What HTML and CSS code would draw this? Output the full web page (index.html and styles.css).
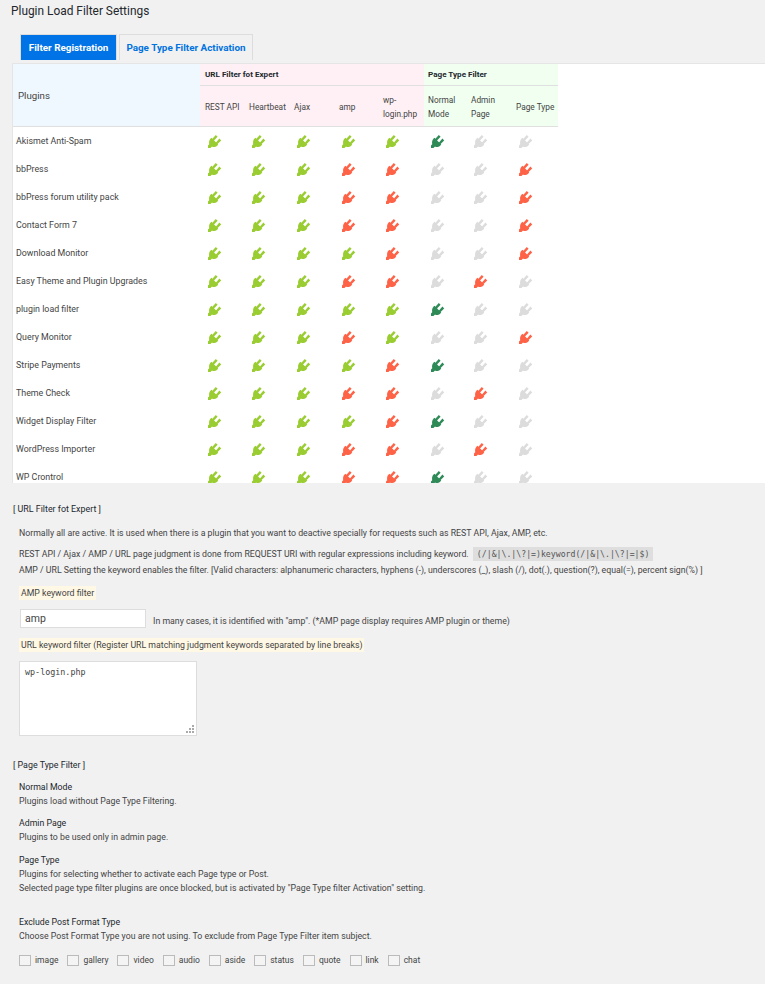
FILE: index.html
```html
<!DOCTYPE html>
<html lang="en">
<head>
<meta charset="utf-8">
<title>Plugin Load Filter Settings</title>
<link rel="stylesheet" href="styles.css">
</head>
<body>
<svg class="defs" width="0" height="0" aria-hidden="true"><symbol id="plug" viewBox="0 0 14 14"><path d="M0 14 V11.5 L1.2 10.3 C.8 8 1.2 6 2.6 4.6 L3.4 3.8 L10.2 10.6 L9.4 11.4 C8 12.8 6 13.2 3.7 12.8 L2.5 14 Z M4.4 4.8 L7.8 1 L9.6 2.8 L6 6.4 Z M8 8.4 L11.4 4.6 L13.2 6.4 L9.6 10 Z"/></symbol></svg>
<h1 class="title">Plugin Load Filter Settings</h1>
<nav class="tabs">
<a class="tab active">Filter Registration</a>
<a class="tab">Page Type Filter Activation</a>
</nav>
<div class="panel">
<table class="grid">
<colgroup><col class="c0"><col class="w44"><col class="w45"><col class="w45"><col class="w44"><col class="w46"><col class="w43"><col class="w45"><col class="w46"></colgroup>
<thead>
<tr class="h1"><th rowspan="2" class="plugins">Plugins</th><th colspan="5" class="url">URL Filter fot Expert</th><th colspan="3" class="ptype">Page Type Filter</th></tr>
<tr class="h2"><td class="url">REST API</td><td class="url">Heartbeat</td><td class="url">Ajax</td><td class="url">amp</td><td class="url">wp-login.php</td><td class="ptype">Normal Mode</td><td class="ptype">Admin Page</td><td class="ptype">Page Type</td></tr>
</thead>
<tbody id="rows"></tbody>
</table>
</div>
<section class="notes">
<h3 class="sec">[ URL Filter fot Expert ]</h3>
<p class="p1">Normally all are active. It is used when there is a plugin that you want to deactive specially for requests such as REST API, Ajax, AMP, etc.</p>
<p class="p2">REST API / Ajax / AMP / URL page judgment is done from REQUEST URI with regular expressions including keyword. <code>(/|&amp;|\.|\?|=)keyword(/|&amp;|\.|\?|=|$)</code><br>AMP / URL Setting the keyword enables the filter. [Valid characters: alphanumeric characters, hyphens (-), underscores (_), slash (/), dot(.), question(?), equal(=), percent sign(%) ]</p>
<div class="lab l1"><span>AMP keyword filter</span></div>
<div class="amp"><input class="kw" type="text" value="amp"><span class="hint">In many cases, it is identified with "amp". (*AMP page display requires AMP plugin or theme)</span></div>
<div class="lab l2"><span>URL keyword filter (Register URL matching judgment keywords separated by line breaks)</span></div>
<div class="ta-wrap"><textarea class="ta">wp-login.php</textarea><svg class="grip" width="9" height="9" viewBox="0 0 9 9" aria-hidden="true"><path d="M6 0h2v2H6zM3 3h2v2H3zM6 3h2v2H6zM0 6h2v2H0zM3 6h2v2H3zM6 6h2v2H6z"/></svg></div>
<h3 class="sec sec2">[ Page Type Filter ]</h3>
<dl class="d d1"><dt>Normal Mode</dt><dd>Plugins load without Page Type Filtering.</dd></dl>
<dl class="d d2"><dt>Admin Page</dt><dd>Plugins to be used only in admin page.</dd></dl>
<dl class="d d3"><dt>Page Type</dt><dd>Plugins for selecting whether to activate each Page type or Post.<br>Selected page type filter plugins are once blocked, but is activated by "Page Type filter Activation" setting.</dd></dl>
<dl class="d d4"><dt>Exclude Post Format Type</dt><dd>Choose Post Format Type you are not using. To exclude from Page Type Filter item subject.</dd></dl>
<div class="checks">
<label><input type="checkbox">image</label><label><input type="checkbox">gallery</label><label><input type="checkbox">video</label><label><input type="checkbox">audio</label><label><input type="checkbox">aside</label><label><input type="checkbox">status</label><label><input type="checkbox">quote</label><label><input type="checkbox">link</label><label><input type="checkbox">chat</label>
</div>
</section>
<script src="app.js"></script>
</body>
</html>
```
FILE: styles.css
```css
* { box-sizing: border-box; }
html, body { margin: 0; padding: 0; }
body { width: 765px; height: 984px; overflow: hidden; background: #f1f1f1; color: #444; font: 8.76px/14px Roboto, "Open Sans", sans-serif; }
.defs { position: absolute; }
.title { margin: 0; padding: 3px 0 0 11px; height: 34px; font-size: 11.9px; line-height: 16px; font-weight: 400; color: #23282d; }
.tabs { display: flex; gap: 2px; padding-left: 20px; height: 26px; }
.tab { display: flex; align-items: center; justify-content: center; height: 26px; font-size: 9.9px; font-weight: 700; color: #0073e0; background: #f1f1f1; border: 1px solid #ddd; border-bottom: 0; }
.tab.active { width: 97px; background: #0073e6; color: #fff; border-color: #ddd; }
.tab:not(.active) { width: 134px; }
.panel { margin: 3px 0 0 12px; height: 420px; overflow: hidden; background: #fff; border-top: 1px solid #e5e5e5; border-left: 1px solid #e5e5e5; }
.grid { width: 545px; border-collapse: collapse; table-layout: fixed; font-size: 8.3px; }
.c0 { width: 187px; } .w43 { width: 43px; } .w44 { width: 44px; } .w45 { width: 45px; } .w46 { width: 46px; }
.grid th, .grid td { padding: 0 0 0 5px; font-weight: 400; text-align: left; }
.h1 { height: 21px; }
.h2 { height: 41px; border-bottom: 1px solid #e0e0e0; }
.grid .h1 .url, .grid .h1 .ptype { font-weight: 700; font-size: 8.1px; color: #23282d; border-bottom: 1px solid #e0e0e0; }
.grid .h2 td { line-height: 14px; padding-right: 1px; padding-top: 2px; }
.url { background: #fff0f5; }
.ptype { background: #f0fff0; }
.grid .ptype { padding-left: 4px; }
.grid .plugins { background: #f0f8ff; font-size: 9.7px; padding: 2px 0 0 5px; border-bottom: 1px solid #e0e0e0; }
.grid tbody tr { height: 28px; }
.grid tbody td { padding: 2px 0 0 8px; }
.grid tbody td:nth-child(n+7) { padding-left: 7px; }
.grid tbody td.name { padding-left: 3px; font-size: 8.85px; }
.pi { display: block; width: 14px; height: 14px; }
.g { fill: #9acd32; } .r { fill: #ff6347; } .d-on { fill: #2e8b57; } .x { fill: #dcdcdc; }
.notes { padding-left: 13px; }
.sec { margin: 0; padding-top: 19px; height: 33px; line-height: 14px; font-size: 8.9px; font-weight: 400; color: #23282d; }
.p1 { margin: 10px 0 0 6px; }
.p2 { margin: 6px 0 0 6px; line-height: 16px; }
code { font: 8.2px/15px "DejaVu Sans Mono", monospace; background: #dedede; padding: 2px 4px; margin-left: 2px; color: #555; }
.lab { margin: 0 0 0 6px; }
.lab span { background: #fff8e5; padding: 2px 2px; }
.l1 { margin-top: 8px; }
.amp { display: flex; align-items: center; margin: 8px 0 0 7px; gap: 7px; }
.hint { margin-top: 6px; }
.kw { width: 126px; height: 19px; border: 1px solid #ddd; background: #fff; padding: 0 4px; font: 10.5px Roboto, sans-serif; color: #444; border-radius: 0; outline: 0; margin: 0; }
.l2 { margin-top: 10px; }
.ta-wrap { position: relative; margin: 9px 0 0 6px; width: 178px; height: 75px; }
.ta { display: block; width: 178px; height: 75px; border: 1px solid #ddd; background: #fff; padding: 3px 5px; font: 8.4px/14px "DejaVu Sans Mono", monospace; color: #444; border-radius: 0; outline: 0; resize: none; margin: 0; }
.grip { position: absolute; right: 2px; bottom: 2px; fill: #aaa; }
.sec2 { padding-top: 22px; height: 36px; }
.d { margin: 0 0 0 6px; }
.d dt { color: #23282d; line-height: 14px; }
.d dd { margin: 0; line-height: 14px; }
.d.d1 { margin-top: 8px; }
.d.d2 { margin-top: 8px; }
.d.d3 { margin-top: 9px; }
.d.d4 { margin-top: 20px; }
.checks { display: flex; margin: 10px 0 0 6px; font-size: 8.5px; }
.checks label { display: flex; align-items: center; margin-right: 9px; }
.checks input { appearance: none; width: 12px; height: 11px; margin: 0 4px 0 0; border: 1px solid #bbb; background: #f4f4f4; border-radius: 0; }
```
FILE: app.js
```js
var rows = [
  ["Akismet Anti-Spam", "gggggdxx"],
  ["bbPress", "gggrrxxr"],
  ["bbPress forum utility pack", "gggrrxxr"],
  ["Contact Form 7", "gggrrxxr"],
  ["Download Monitor", "ggggrxxr"],
  ["Easy Theme and Plugin Upgrades", "gggrrxrx"],
  ["plugin load filter", "gggggdxx"],
  ["Query Monitor", "gggrgxxr"],
  ["Stripe Payments", "ggggrdxx"],
  ["Theme Check", "gggrrxrx"],
  ["Widget Display Filter", "ggggrdxx"],
  ["WordPress Importer", "gggrrxrx"],
  ["WP Crontrol", "gggrrdxx"]
];
var html = "";
rows.forEach(function (r) {
  html += '<tr><td class="name">' + r[0] + "</td>";
  r[1].split("").forEach(function (c) {
    var cls = c === "d" ? "d-on" : c;
    html += '<td><svg class="pi ' + cls + '"><use href="#plug"/></svg></td>';
  });
  html += "</tr>";
});
document.getElementById("rows").innerHTML = html;
```
